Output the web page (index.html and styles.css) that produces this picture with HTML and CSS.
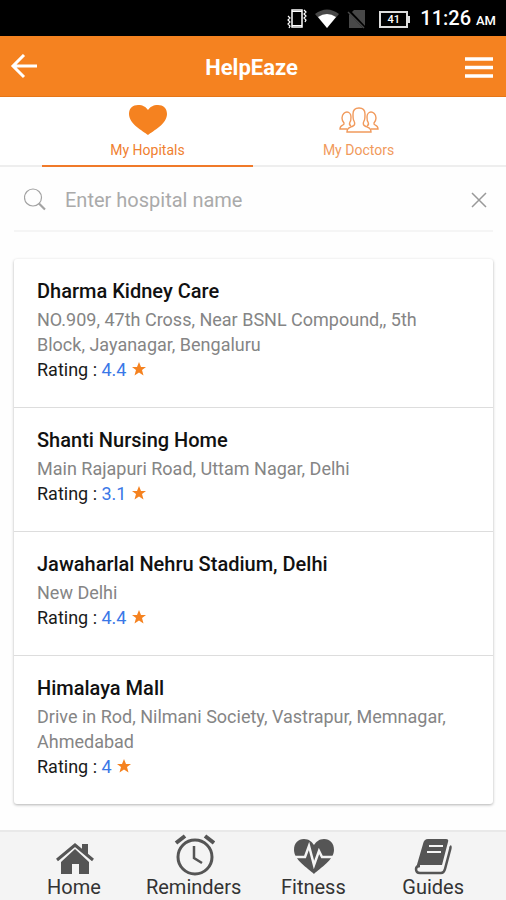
FILE: index.html
```html
<!DOCTYPE html>
<html lang="en">
<head>
<meta charset="utf-8">
<meta name="viewport" content="width=device-width, initial-scale=1">
<title>HelpEaze</title>
<link rel="stylesheet" href="styles.css">
</head>
<body>
<div class="app">
  <div class="status">
    <svg width="20" height="20" viewBox="0 0 20 20" fill="none" stroke="#fff" stroke-width="1.500"><rect x="5" y="1" width="10" height="17"/><path d="M5 2.500h10M5 16.500h10" stroke-width="1"/><path d="M1 7l2 2-2 2 2 2-2 2 2 2-1 2M17 1l2 2-2 2 2 2-2 2 2 2-1 2" stroke-width="1.200"/></svg>
    <svg width="24" height="20" viewBox="0 0 24 20"><path d="M0 5Q12-4 24 5L12 19z" fill="#484848"/><path d="M3 8Q12 2 21 8L12 19z" fill="#fff"/></svg>
    <svg width="20" height="20" viewBox="0 0 20 20"><path d="M7 1h11v18H2V6z" fill="#484848"/><path d="M1 1l17 18" stroke="#000" stroke-width="3"/><path d="M1 3l16 16" stroke="#484848" stroke-width="1.500"/></svg>
    <span class="battery">41</span>
    <span class="time">11:26 <small>AM</small></span>
  </div>
  <header class="bar">
    <button class="icon-button" aria-label="Back"><svg width="28" height="28" viewBox="0 0 28 28" fill="none" stroke="#fff" stroke-width="3"><path d="M14 1L3 12l11 11M3 12h24"/></svg></button>
    <h1>HelpEaze</h1>
    <button class="icon-button" aria-label="Menu"><svg width="28" height="28" viewBox="0 0 28 28"><path d="M0 5h28M0 13.500h28M0 22h28" stroke="#fff" stroke-width="3.500"/></svg></button>
  </header>
  <nav class="tabs" aria-label="Lists">
    <a class="tab active" href="#hospitals">
      <svg width="40" height="34" viewBox="0 0 40 34"><path d="M20 32C15 28 1 21 1 11 1 5 5 2 10 2c5 0 8 2 10 5 2-3 5-5 10-5 5 0 9 3 9 9 0 10-14 17-19 21z" fill="#f58220"/></svg>
      <span>My Hopitals</span>
    </a>
    <a class="tab" href="#doctors">
      <svg width="40" height="34" viewBox="0 0 40 34" fill="none" stroke="#f19a5c" stroke-width="1.400"><path d="M8 29c0-4 2-4 6-6 2-1 2-3 1-5-1-1-1-4-1-7 0-4 2-6 6-6s6 2 6 6c0 3 0 6-1 7-1 2-1 4 1 5 4 2 6 2 6 6z"/><path d="M12 23c-2-1-2-2-1-4 1-1 1-3 1-5 0-3-2-5-4-5s-5 2-5 6c0 2 1 4 2 5 1 3-4 1-4 6h7M28 23c2-1 2-2 1-4-1-1-1-3-1-5 0-3 2-5 4-5s5 2 5 6c0 2-1 4-2 5-1 3 4 1 4 6h-7"/></svg>
      <span>My Doctors</span>
    </a>
  </nav>
  <main>
    <form class="search">
      <label for="hospital"><svg width="24" height="24" viewBox="0 0 24 24" fill="none" stroke="#a3a3a3"><circle cx="9" cy="9.500" r="8.500" stroke-width="1.200"/><path d="M15 15.500l6 6" stroke-width="2.200"/></svg></label>
      <input id="hospital" type="text" placeholder="Enter hospital name" aria-label="Hospital name">
      <button class="icon-button" type="reset" aria-label="Clear"><svg width="18" height="18" viewBox="0 0 18 18"><path d="M2 2l14 14M16 2L2 16" stroke="#999" stroke-width="1.500"/></svg></button>
    </form>
    <ul class="card" id="hospitals">
      <li><h2>Dharma Kidney Care</h2><p class="address">NO.909, 47th Cross, Near BSNL Compound,, 5th Block, Jayanagar, Bengaluru</p>
        <p class="rating">Rating : <b>4.4</b> <svg class="star" viewBox="0 0 14 14"><path d="M7 0l2 5h5l-4 3 1.500 5.500L7 10.500l-4.500 3L4 8 0 5h5z"/></svg></p></li>
      <li><h2>Shanti Nursing Home</h2><p class="address">Main Rajapuri Road, Uttam Nagar, Delhi</p>
        <p class="rating">Rating : <b>3.1</b> <svg class="star" viewBox="0 0 14 14"><path d="M7 0l2 5h5l-4 3 1.500 5.500L7 10.500l-4.500 3L4 8 0 5h5z"/></svg></p></li>
      <li><h2>Jawaharlal Nehru Stadium, Delhi</h2><p class="address">New Delhi</p>
        <p class="rating">Rating : <b>4.4</b> <svg class="star" viewBox="0 0 14 14"><path d="M7 0l2 5h5l-4 3 1.500 5.500L7 10.500l-4.500 3L4 8 0 5h5z"/></svg></p></li>
      <li><h2>Himalaya Mall</h2><p class="address">Drive in Rod, Nilmani Society, Vastrapur, Memnagar, Ahmedabad</p>
        <p class="rating">Rating : <b>4</b> <svg class="star" viewBox="0 0 14 14"><path d="M7 0l2 5h5l-4 3 1.500 5.500L7 10.500l-4.500 3L4 8 0 5h5z"/></svg></p></li>
    </ul>
  </main>
  <nav class="bottom" aria-label="Main">
    <a href="#home"><svg width="42" height="42" viewBox="0 0 42 42" fill="#555"><path d="M8 28L22 15l14 13v12H26V30h-7v10H8z"/><path d="M29 10h6v13l-6-6z"/><path d="M4 26L22 11l18 15" fill="none" stroke="#555" stroke-width="3"/></svg><span>Home</span></a>
    <a href="#reminders"><svg width="42" height="42" viewBox="0 0 42 42" fill="none" stroke="#555" stroke-width="3"><circle cx="22" cy="23" r="17"/><path d="M21 12v12l8 5" stroke-width="2.500"/><path d="M3 9l9-7M32 2l9 7" stroke-width="4"/></svg><span>Reminders</span></a>
    <a href="#fitness"><svg width="42" height="42" viewBox="0 0 42 42"><path d="M22 40C16 34 2 26 2 16 2 9 6 5 12 5c5 0 8 3 10 6 2-3 5-6 10-6 6 0 10 4 10 11 0 10-14 18-20 24z" fill="#555"/><path d="M2 23h11l4-11 5 19 5-14 3 6h12" fill="none" stroke="#f4f4f4" stroke-width="2.500"/></svg><span>Fitness</span></a>
    <a href="#guides"><svg width="42" height="42" viewBox="0 0 42 42"><path d="M16 5h18q3 0 2 3l-6 23H8q-3 0-4 3l7-24q1-5 5-5z" fill="#555"/><path d="M38 12q1 1 0 4l-5 19q-1 4-4 4H8q-4 0-4-4 0-3 4-3" fill="none" stroke="#555" stroke-width="2.500"/><path d="M17 12h14M15 18h14" stroke="#f4f4f4" stroke-width="2"/></svg><span>Guides</span></a>
  </nav>
</div>
</body>
</html>
```
FILE: styles.css
```css
* { box-sizing: border-box; }
body { margin: 0; background: #fefefe; color: #1a1a1a; font-family: Roboto, "Liberation Sans", sans-serif; }
h1, h2, p, ul { margin: 0; padding: 0; }
svg { display: block; flex: none; }
a { color: inherit; text-decoration: none; }
.app { display: flex; flex-direction: column; min-height: 100vh; }
.status { display: flex; align-items: center; justify-content: flex-end; height: 36px; padding: 2px 10px 0; background: #000; color: #fff; gap: 8px; }
.battery { position: relative; width: 29px; margin: 0 4px; border: 2px solid #ddd; font-size: 11px; font-weight: 500; line-height: 13px; text-align: center; }
.battery::after { content: ""; position: absolute; top: 3px; right: -4px; width: 2px; height: 7px; background: #ddd; }
.time { font-size: 20px; font-weight: 500; line-height: 28px; white-space: nowrap; }
.time small { font-size: 13px; }
.bar { display: flex; align-items: center; justify-content: space-between; height: 61px; padding: 4px 13px 0 10px; background: #f58220; color: #fff; border-bottom: 1px solid #e57618; }
.bar h1 { font-size: 22px; font-weight: 700; line-height: 28px; }
.icon-button { padding: 0; border: 0; background: none; cursor: pointer; }
.tabs { display: flex; padding: 0 42px; border-bottom: 2px solid #eee; background: #fff; }
.tab { flex: 1; display: flex; flex-direction: column; align-items: center; height: 70px; margin-bottom: -2px; padding-top: 6px; gap: 4px; border-bottom: 2px solid transparent; color: #f19a5c; font-size: 14px; line-height: 18px; }
.tab.active { border-color: #f07a2a; color: #f08030; }
main { padding: 0 13px 0 14px; }
.search { display: flex; align-items: center; height: 65px; padding: 3px 5px 0 10px; gap: 17px; border-bottom: 2px solid #f5f5f5; }
.search input { flex: 1; min-width: 0; padding: 0; border: 0; outline: 0; background: none; color: #333; font: 20px/28px Roboto, "Liberation Sans", sans-serif; }
.search input::placeholder { color: #aaa; opacity: 1; }
.card { margin: 27px 0 25px; list-style: none; background: #fff; border-radius: 3px; box-shadow: 0 1px 3px #0000004d; }
.card li { padding: 20px 40px 25px 23px; border-bottom: 1px solid #ddd; }
.card li:last-child { border-bottom: 0; }
.card h2 { margin-bottom: 3px; color: #111; font-size: 20px; font-weight: 500; line-height: 25px; }
.card p { font-size: 18px; line-height: 25px; }
.card .address { color: #858585; }
.rating b { color: #3a78e7; font-weight: 400; }
.star { display: inline-block; width: 14px; height: 14px; margin-left: 1px; fill: #f58220; }
.bottom { display: flex; height: 70px; margin-top: auto; padding: 0 13px 0 14px; border-top: 2px solid #e9e9e9; background: #f4f4f4; color: #333; }
.bottom a { flex: 1; display: flex; flex-direction: column; align-items: center; padding-top: 2px; font-size: 20px; line-height: 22px; }
```
